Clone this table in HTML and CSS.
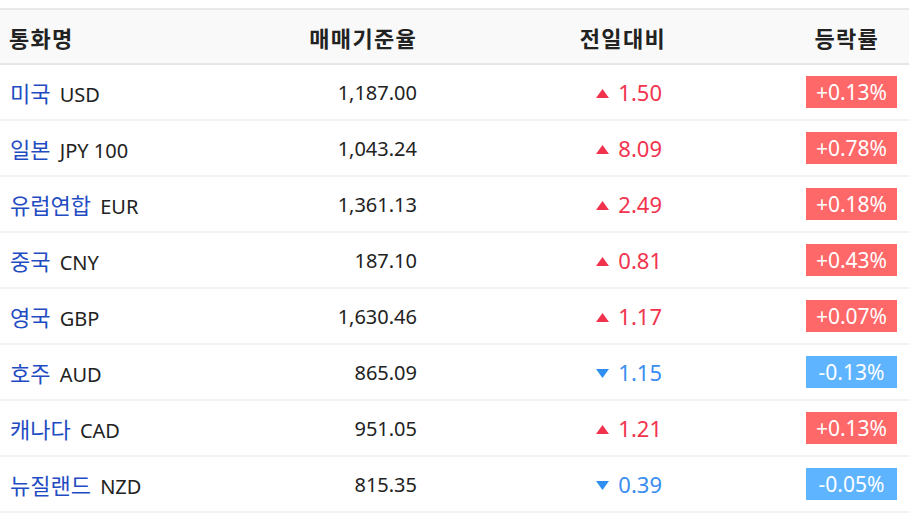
FILE: index.html
```html
<!DOCTYPE html>
<html lang="ko">
<head>
<meta charset="utf-8">
<link rel="stylesheet" href="styles.css">
</head>
<body>
<table class="fx">
  <colgroup>
    <col class="c-name"><col class="c-rate"><col class="c-diff"><col class="c-pct">
  </colgroup>
  <thead>
    <tr>
      <th class="h-name">통화명</th>
      <th class="h-rate">매매기준율</th>
      <th class="h-diff">전일대비</th>
      <th class="h-pct">등락률</th>
    </tr>
  </thead>
  <tbody>
    <tr>
      <td class="name"><span class="country">미국</span> USD</td>
      <td class="rate">1,187.00</td>
      <td class="diff up"><svg class="tri" viewBox="0 0 13 9" width="13" height="9"><polygon points="0,9 6.5,0 13,9"/></svg>1.50</td>
      <td class="pct"><span class="badge up">+0.13%</span></td>
    </tr>
    <tr>
      <td class="name"><span class="country">일본</span> JPY 100</td>
      <td class="rate">1,043.24</td>
      <td class="diff up"><svg class="tri" viewBox="0 0 13 9" width="13" height="9"><polygon points="0,9 6.5,0 13,9"/></svg>8.09</td>
      <td class="pct"><span class="badge up">+0.78%</span></td>
    </tr>
    <tr>
      <td class="name"><span class="country">유럽연합</span> EUR</td>
      <td class="rate">1,361.13</td>
      <td class="diff up"><svg class="tri" viewBox="0 0 13 9" width="13" height="9"><polygon points="0,9 6.5,0 13,9"/></svg>2.49</td>
      <td class="pct"><span class="badge up">+0.18%</span></td>
    </tr>
    <tr>
      <td class="name"><span class="country">중국</span> CNY</td>
      <td class="rate">187.10</td>
      <td class="diff up"><svg class="tri" viewBox="0 0 13 9" width="13" height="9"><polygon points="0,9 6.5,0 13,9"/></svg>0.81</td>
      <td class="pct"><span class="badge up">+0.43%</span></td>
    </tr>
    <tr>
      <td class="name"><span class="country">영국</span> GBP</td>
      <td class="rate">1,630.46</td>
      <td class="diff up"><svg class="tri" viewBox="0 0 13 9" width="13" height="9"><polygon points="0,9 6.5,0 13,9"/></svg>1.17</td>
      <td class="pct"><span class="badge up">+0.07%</span></td>
    </tr>
    <tr>
      <td class="name"><span class="country">호주</span> AUD</td>
      <td class="rate">865.09</td>
      <td class="diff down"><svg class="tri" viewBox="0 0 13 9" width="13" height="9"><polygon points="0,0 13,0 6.5,9"/></svg>1.15</td>
      <td class="pct"><span class="badge down">-0.13%</span></td>
    </tr>
    <tr>
      <td class="name"><span class="country">캐나다</span> CAD</td>
      <td class="rate">951.05</td>
      <td class="diff up"><svg class="tri" viewBox="0 0 13 9" width="13" height="9"><polygon points="0,9 6.5,0 13,9"/></svg>1.21</td>
      <td class="pct"><span class="badge up">+0.13%</span></td>
    </tr>
    <tr>
      <td class="name"><span class="country">뉴질랜드</span> NZD</td>
      <td class="rate">815.35</td>
      <td class="diff down"><svg class="tri" viewBox="0 0 13 9" width="13" height="9"><polygon points="0,0 13,0 6.5,9"/></svg>0.39</td>
      <td class="pct"><span class="badge down">-0.05%</span></td>
    </tr>
  </tbody>
</table>
</body>
</html>
```
FILE: styles.css
```css
html, body {
  margin: 0;
  padding: 0;
  background: #fff;
}
body {
  padding-top: 8px;
  font-family: "Noto Sans", "Noto Sans CJK KR", sans-serif;
  color: #222;
}
.fx {
  width: 100%;
  border-collapse: collapse;
  table-layout: fixed;
  border-top: 2px solid #e8e8e8;
}
.c-name { width: 250px; }
.c-rate { width: 168px; }
.c-diff { width: 248px; }
.c-pct { width: 243px; }

thead tr {
  background: #f9f9f9;
  border-bottom: 2px solid #e6e6e6;
}
th {
  height: 53px;
  padding: 0;
  font-family: "Noto Sans CJK KR", sans-serif;
  font-size: 22px;
  letter-spacing: 1.3px;
  font-weight: 700;
  color: #222;
  vertical-align: middle;
}
.h-name { text-align: left; padding-left: 9px; }
.h-rate { text-align: right; padding-right: 1px; }
.h-diff { text-align: right; padding-right: 0; }
.h-pct { text-align: right; padding-right: 30px; }

tbody tr {
  border-bottom: 2px solid #f2f2f2;
}
td {
  height: 54px;
  padding: 0;
  vertical-align: middle;
  font-size: 20px;
  white-space: nowrap;
}
.name { padding-left: 10px; }
.country {
  font-family: "Noto Sans CJK KR", sans-serif;
  font-size: 22px;
  color: #1f4cc2;
  margin-right: 4px;
}
.rate { text-align: right; padding-right: 1px; }
.diff {
  text-align: right;
  padding-right: 4px;
  font-size: 22px;
}
.diff.up { color: #f2334d; }
.diff.down { color: #3a8ef0; }
.tri {
  margin-right: 9px;
  vertical-align: 3px;
}
.diff.up .tri { fill: #f2334d; }
.diff.down .tri { fill: #2f8ef0; }
.pct {
  text-align: right;
  padding-right: 12px;
}
.badge {
  display: inline-block;
  width: 91px;
  height: 32px;
  line-height: 32px;
  text-align: center;
  color: #fff;
  font-size: 21px;
}
.badge.up { background: #ff6868; }
.badge.down { background: #5eb4ff; }
```
